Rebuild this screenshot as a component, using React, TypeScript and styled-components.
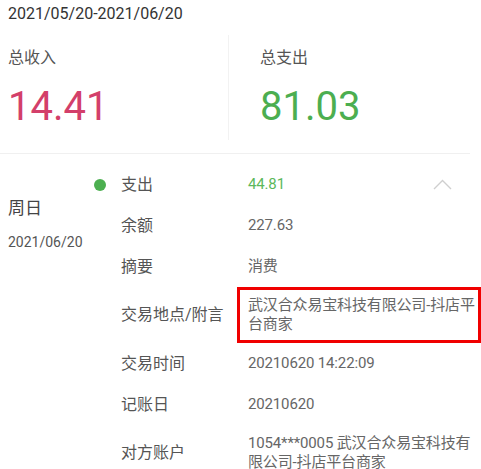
import React from 'react';
import styled, { createGlobalStyle } from 'styled-components';

const GlobalStyle = createGlobalStyle`
  body {
    margin: 0;
    background: #fff;
    font-family: Roboto, "Noto Sans CJK SC", sans-serif;
  }
`;

const Page = styled.div`
  width: 481px;
  overflow: hidden;
`;

const DateRange = styled.div`
  padding: 4px 8px 0;
  font-size: 16px;
  line-height: 20px;
  color: #333;
`;

const Summary = styled.div`
  display: flex;
  margin: 11px 11px 0 0;
  padding-bottom: 13px;
  border-bottom: 1px solid #f0f0f0;
`;

const SummaryCol = styled.div<{ $first?: boolean }>`
  height: 105px;
  box-sizing: border-box;
  padding: 12px 0 0 ${p => (p.$first ? '8px' : '31px')};
  width: ${p => (p.$first ? '229px' : 'auto')};
  flex: ${p => (p.$first ? 'none' : '1')};
  border-right: ${p => (p.$first ? '1px solid #f2f2f2' : 'none')};
`;

const SummaryLabel = styled.div`
  font-size: 16px;
  line-height: 22px;
  color: #555;
`;

const SummaryAmount = styled.div<{ $color: string }>`
  margin-top: 14px;
  font-size: 40px;
  line-height: 48px;
  color: ${p => p.$color};
`;

const Transaction = styled.div`
  display: flex;
  padding-top: 10px;
`;

const DayCol = styled.div`
  width: 94px;
  flex: none;
  box-sizing: border-box;
  padding: 32px 0 0 8px;
`;

const Weekday = styled.div`
  font-size: 17px;
  line-height: 24px;
  color: #444;
`;

const DayDate = styled.div`
  margin-top: 12px;
  font-size: 14px;
  line-height: 20px;
  color: #555;
`;

const DetailList = styled.div`
  flex: 1;
  display: grid;
  grid-template-columns: 27px 116px 1fr;
`;

const DotCell = styled.div`
  display: flex;
  align-items: center;
`;

const Dot = styled.span`
  width: 12px;
  height: 12px;
  border-radius: 50%;
  background: #4caf50;
`;

const Label = styled.div`
  display: flex;
  align-items: center;
  min-height: 41px;
  font-size: 16px;
  line-height: 20px;
  color: #555;
`;

const Value = styled.div<{ $marked?: boolean; $color?: string }>`
  display: flex;
  align-items: center;
  justify-content: space-between;
  box-sizing: border-box;
  min-height: 41px;
  padding: ${p => (p.$marked ? '6px 0 6px 8px' : '9px 2px 9px 11px')};
  border: ${p => (p.$marked ? '3px solid #f00000' : 'none')};
  font-size: 15px;
  line-height: 19px;
  letter-spacing: -0.15px;
  color: ${p => p.$color || '#666'};
`;

const Chevron = styled.svg`
  margin-right: 27px;
`;

interface IRow {
  label: string;
  value: string;
  marked?: boolean;
}

const rows: IRow[] = [
  { label: '余额', value: '227.63' },
  { label: '摘要', value: '消费' },
  { label: '交易地点/附言', value: '武汉合众易宝科技有限公司-抖店平台商家', marked: true },
  { label: '交易时间', value: '20210620 14:22:09' },
  { label: '记账日', value: '20210620' },
  { label: '对方账户', value: '1054***0005 武汉合众易宝科技有限公司-抖店平台商家' },
];

const App = () => (
  <Page>
    <GlobalStyle />
    <DateRange>2021/05/20-2021/06/20</DateRange>
    <Summary>
      <SummaryCol $first>
        <SummaryLabel>总收入</SummaryLabel>
        <SummaryAmount $color="#d33f6a">14.41</SummaryAmount>
      </SummaryCol>
      <SummaryCol>
        <SummaryLabel>总支出</SummaryLabel>
        <SummaryAmount $color="#4cae50">81.03</SummaryAmount>
      </SummaryCol>
    </Summary>
    <Transaction>
      <DayCol>
        <Weekday>周日</Weekday>
        <DayDate>2021/06/20</DayDate>
      </DayCol>
      <DetailList>
        <DotCell><Dot /></DotCell>
        <Label>支出</Label>
        <Value $color="#5cb85c">
          44.81
          <Chevron width="19" height="11" viewBox="0 0 19 11" fill="none" stroke="#cfcfcf" strokeWidth="1.4">
            <path d="M1 10 L9.5 1.5 L18 10" />
          </Chevron>
        </Value>
        {rows.map(row => (
          <React.Fragment key={row.label}>
            <DotCell />
            <Label>{row.label}</Label>
            <Value $marked={row.marked}>{row.value}</Value>
          </React.Fragment>
        ))}
      </DetailList>
    </Transaction>
  </Page>
);

export default App;
